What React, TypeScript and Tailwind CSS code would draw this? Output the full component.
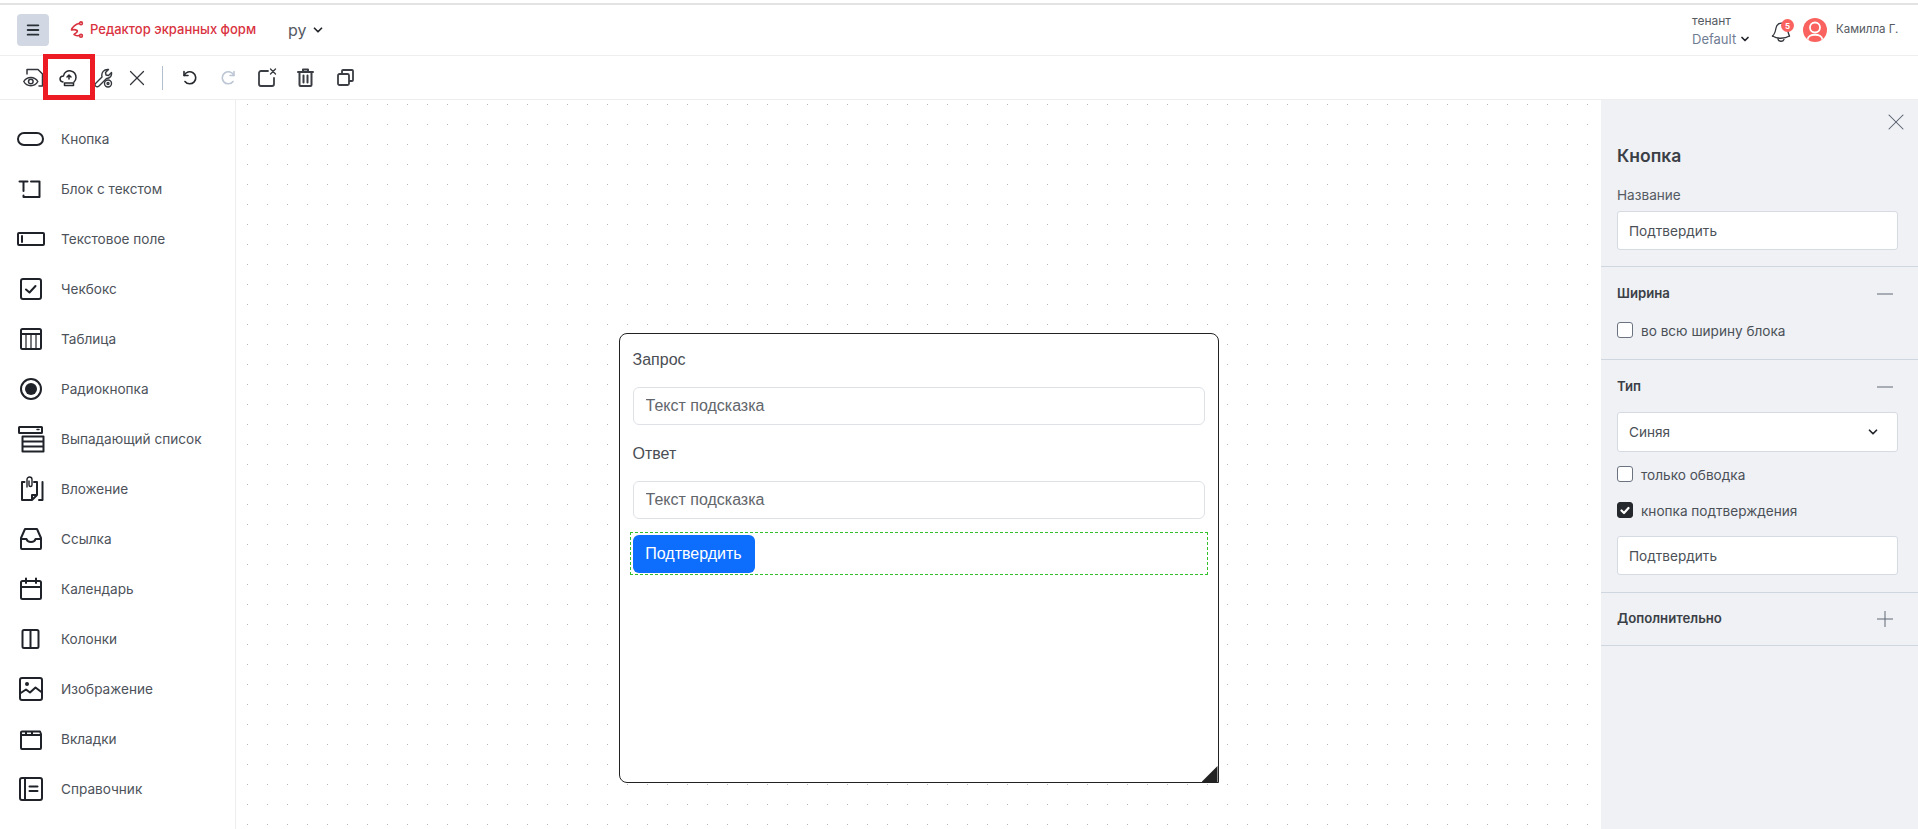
import { ChevronDown, Menu, Minus, Plus, X } from 'lucide-react';
import type { ReactNode } from 'react';

const ink = '#1f2228';

function Ico({ w = 30, h = 24, children, sw = 2 }: { w?: number; h?: number; children: ReactNode; sw?: number }) {
  return (
    <svg width={w} height={h} viewBox={`0 0 ${w} ${h}`} fill="none" stroke={ink} strokeWidth={sw} strokeLinecap="round" strokeLinejoin="round">
      {children}
    </svg>
  );
}

const paletteItems: { label: string; icon: ReactNode }[] = [
  { label: 'Кнопка', icon: <Ico><rect x="2" y="6" width="25" height="12" rx="6" /></Ico> },
  { label: 'Блок с текстом', icon: <Ico><path d="M3.500 4.500h8M7.500 4.500V14M15 4.500h8.500V20H7.500v-1.500" /></Ico> },
  { label: 'Текстовое поле', icon: <Ico><rect x="2" y="6" width="26" height="12" rx="1" /><path d="M6 9v6" /></Ico> },
  { label: 'Чекбокс', icon: <Ico><rect x="5" y="2" width="20" height="20" rx="2" /><path d="M10 12.500l3.500 3 6-6.500" /></Ico> },
  { label: 'Таблица', icon: <Ico><rect x="5" y="2" width="20" height="20" rx="1.500" /><path d="M5 7h20" /><path d="M10 7v15M15 7v15M20 7v15" strokeWidth="1.200" /></Ico> },
  { label: 'Радиокнопка', icon: <Ico><circle cx="15" cy="12" r="10" /><circle cx="15" cy="12" r="6" fill={ink} stroke="none" /></Ico> },
  { label: 'Выпадающий список', icon: <Ico w={30} h={28}><rect x="3" y="2" width="23" height="6" rx="0.500" /><path d="M6.500 11.500h21v15h-21zM6.500 16.500h21M6.500 21.500h21" /><path d="M21 4.500h2" strokeWidth="1.500" /></Ico> },
  { label: 'Вложение', icon: <Ico w={30} h={26}><path d="M8.500 6H6v18h10l5-5V6h-3M21 19h-5v5" /><path d="M26.500 6v18H23" /><path d="M11 11V3.500a2.500 2.500 0 0 1 5 0V9a1.500 1.500 0 0 1-3 0V5" strokeWidth="1.400" /></Ico> },
  { label: 'Ссылка', icon: <Ico><path d="M9 2h12l4 9v10a1 1 0 0 1-1 1H6a1 1 0 0 1-1-1V11z" /><path d="M5 12h5.500c1 4 8 4 9 0H25" /></Ico> },
  { label: 'Календарь', icon: <Ico><rect x="5" y="4" width="20" height="18" rx="1.500" /><path d="M5 10h20M10 1.500V6M20 1.500V6" /></Ico> },
  { label: 'Колонки', icon: <Ico><rect x="6.500" y="3" width="16" height="18" rx="1.500" /><path d="M14.500 3v18" /></Ico> },
  { label: 'Изображение', icon: <Ico w={30} h={26}><rect x="4" y="2" width="22" height="22" rx="2" /><path d="M4 17.500l6-4 4 3 5.500-5 6.500 5" /><circle cx="11" cy="8" r="1" fill={ink} /></Ico> },
  { label: 'Вкладки', icon: <Ico><path d="M5 5.500a1 1 0 0 1 1-1h18l1 2.500V21a1 1 0 0 1-1 1H6a1 1 0 0 1-1-1zM5 8h20M10 4.500V8M16 4.500V8" /></Ico> },
  { label: 'Справочник', icon: <Ico w={30} h={26}><rect x="4" y="2" width="22" height="22" rx="2" /><path d="M9 2v22M13.500 10.500h8M13.500 15h8" /></Ico> },
];

function Check({ on = false, label }: { on?: boolean; label: string }) {
  return (
    <div className="flex items-center gap-2 h-4">
      <span className={`flex items-center justify-center w-4 h-4 rounded-[3px] border ${on ? 'bg-[#25282d] border-[#25282d]' : 'bg-white border-[#6b7280]'}`}>
        {on && (
          <svg width="12" height="12" viewBox="0 0 12 12" fill="none" stroke="#fff" strokeWidth="2.200" strokeLinecap="round" strokeLinejoin="round">
            <path d="M2.500 6.500l2.500 2.500 4.500-5" />
          </svg>
        )}
      </span>
      <span className="pt-[2px] text-[13.6px] text-[#4b5057]">{label}</span>
    </div>
  );
}

function PanelField({ value }: { value: string }) {
  return (
    <input
      readOnly
      value={value}
      className="block w-full h-[39px] pl-[11px] pr-3 bg-white border border-[#d5dae3] rounded-[3px] text-[13.6px] text-[#4b5057] outline-none"
    />
  );
}

function CanvasField() {
  return (
    <input
      readOnly
      placeholder="Текст подсказка"
      className="block w-full h-[38px] px-3 bg-white border border-[#dee2e6] rounded-md text-base outline-none placeholder:text-[#62666b]"
    />
  );
}

function SectionHead({ title, open = true }: { title: string; open?: boolean }) {
  return (
    <div className="flex items-center justify-between h-5">
      <span className="text-[13.2px] font-semibold text-[#3b3f46]">{title}</span>
      {open ? <Minus size={26} strokeWidth={0.9} color="#5b6472" /> : <Plus size={26} strokeWidth={0.9} color="#5b6472" />}
    </div>
  );
}

export default function App() {
  return (
    <div className="relative flex flex-col h-[829px] overflow-hidden bg-white font-['Inter',sans-serif]">
      <div className="h-[3px] shrink-0" />
      <div className="h-[2px] shrink-0 bg-[#e3e3e3]" />

      {/* шапка */}
      <header className="flex items-center h-[51px] shrink-0 border-b border-[#eeeeee] pl-[17px] pr-[20px]">
        <button className="flex items-center justify-center w-8 h-8 rounded bg-[#d1d8e3]">
          <Menu size={16} strokeWidth={2.700} color="#2b2f36" />
        </button>
        <svg className="ml-[20px]" width="16" height="18" viewBox="0 0 16 18" fill="none" stroke="#d9333f" strokeWidth="1.600" strokeLinecap="round" strokeLinejoin="round">
          <path d="M10 2.500C7 3 3 6 2.500 9c2-.5 4-.5 5.500.5S6 12.500 5 13.500c1 1 3 1.500 5 1" />
          <circle cx="12" cy="2.300" r="1.400" />
          <circle cx="12" cy="14.800" r="1.400" />
        </svg>
        <span className="ml-[5px] text-[13px] font-medium text-[#d9333f]">Редактор экранных форм</span>
        <span className="ml-[32px] text-base text-[#555a62]">ру</span>
        <ChevronDown className="ml-1" size={14} strokeWidth={3} color="#23262b" />
        <div className="ml-auto flex flex-col w-[78px] text-[#555a62]">
          <span className="text-xs leading-[18px]">тенант</span>
          <span className="flex items-center gap-[3px] text-[13px] leading-[18px] text-[#6f7d93]">
            Default <ChevronDown size={12} strokeWidth={3.500} color="#23262b" />
          </span>
        </div>
        <div className="relative w-6 h-6 mr-[9px]">
          <svg width="24" height="24" viewBox="0 0 24 24" fill="none" stroke="#33363c" strokeWidth="1.300" strokeLinecap="round" strokeLinejoin="round">
            <path d="M2.500 18c2.500-2 3-5 3.500-8C6.500 6.500 10 4 13.500 5.500" />
            <path d="M17.500 12c.5 2 1 4 2 6" />
            <path d="M2.500 18c5 3 12 3 17 0" />
            <path d="M8 20.500c0 3.500 5 3.500 6 1" />
          </svg>
          <span className="absolute left-[11px] top-[1px] flex items-center justify-center w-[13px] h-[13px] rounded-full bg-[#f9625f] text-[8px] font-bold text-white">5</span>
        </div>
        <div className="flex items-center justify-center w-6 h-6 rounded-full bg-[#f9625f] overflow-hidden">
          <svg width="24" height="24" viewBox="0 0 24 24" fill="none" stroke="#fff" strokeWidth="1.800">
            <circle cx="12" cy="9.500" r="5" />
            <path d="M4.500 22c0-7 15-7 15 0" />
          </svg>
        </div>
        <span className="ml-[9px] w-[62px] text-[11.5px] text-[#555a62] whitespace-nowrap">Камилла Г.</span>
      </header>

      {/* панель инструментов */}
      <div className="flex items-center h-11 shrink-0 border-b border-[#eeeeee] pl-[23px]">
        <svg width="21" height="20" viewBox="0 0 21 20" fill="none" stroke="#33363c" strokeWidth="1.500" strokeLinecap="round" strokeLinejoin="round">
          <path d="M4 6V1.500h11l4.500 4.500v12H16" />
          <path d="M.800 13.500c3-5.500 11-5.500 14 0-3 5.500-11 5.500-14 0z" />
          <circle cx="7.800" cy="13.500" r="2.300" />
        </svg>
        <svg className="ml-[15px]" width="20" height="20" viewBox="0 0 20 20" fill="none" stroke="#26292e" strokeWidth="1.500" strokeLinecap="round" strokeLinejoin="round">
          <path d="M4 14C0 13.500 0 8 4.500 8 5 4 9 2 12 3c3 .8 5 3.500 5 6.500 0 2-1 3.500-2 4.500" />
          <path d="M10 11V7M8 9l2-2 2 2" />
          <path d="M5.500 15h9v2.500h-9z" />
        </svg>
        <svg className="ml-[15px]" width="19" height="20" viewBox="0 0 19 20" fill="none" stroke="#33363c" strokeWidth="1.400" strokeLinecap="round" strokeLinejoin="round">
          <path d="M1.500 15.500L8 9C7 4.500 10 1 14.500 1.500l-3 3 .5 2.500 2.500.5 3-3c.5 3.500-1.500 6-5 6L5 18c-1 1-2.500 1-3.500 0s-1-1.500 0-2.500z" />
          <circle cx="14" cy="15.500" r="3.500" fill="#fff" />
          <circle cx="14" cy="15.500" r="1" />
        </svg>
        <X className="ml-[11px]" size={26} strokeWidth={1.150} color="#33363c" />
        <div className="ml-[12px] w-px h-6 bg-[#b4bfce]" />
        <svg className="ml-[19px]" width="15" height="15" viewBox="0 0 15 15" fill="none" stroke="#26292e" strokeWidth="1.600" strokeLinecap="round" strokeLinejoin="round">
          <path d="M2 1.500v4h4" />
          <path d="M2.200 5.500A6 6 0 1 1 3 11.500" />
        </svg>
        <svg className="ml-[24px]" width="15" height="15" viewBox="0 0 15 15" fill="none" stroke="#bcc6d4" strokeWidth="1.600" strokeLinecap="round" strokeLinejoin="round">
          <path d="M13 1.500v4H9" />
          <path d="M12.800 5.500A6 6 0 1 0 12 11.500" />
        </svg>
        <svg className="ml-[22px]" width="19" height="19" viewBox="0 0 19 19" fill="none" stroke="#3a3d43" strokeWidth="1.800" strokeLinecap="round" strokeLinejoin="round">
          <path d="M10 3H3a2 2 0 0 0-2 2v11a2 2 0 0 0 2 2h11a2 2 0 0 0 2-2V10" />
          <path d="M12.500 1l5 5M17.500 1l-5 5" strokeWidth="1.400" />
        </svg>
        <svg className="ml-[20px]" width="17" height="19" viewBox="0 0 17 19" fill="none" stroke="#3a3d43" strokeWidth="2" strokeLinecap="round" strokeLinejoin="round">
          <path d="M1 4h15M6 4V1.500h5V4M2.500 4v13a1 1 0 0 0 1 1h10a1 1 0 0 0 1-1V4M6.500 7.500v7M10.500 7.500v7" />
        </svg>
        <svg className="ml-[23px]" width="17" height="17" viewBox="0 0 17 17" fill="none" stroke="#3a3d43" strokeWidth="1.800" strokeLinejoin="round">
          <rect x="1" y="5" width="11" height="11" rx="1.500" />
          <path d="M5 5V2a1 1 0 0 1 1-1h9a1 1 0 0 1 1 1v9a1 1 0 0 1-1 1h-3" />
        </svg>
      </div>

      <div className="flex flex-1 min-h-0">
        {/* палитра */}
        <aside className="w-[236px] shrink-0 border-r border-[#eeeeee] pt-[14px]">
          {paletteItems.map((item) => (
            <div key={item.label} className="flex items-center h-[50px] pl-[16px]">
              <span className="flex items-center justify-center w-[30px]">{item.icon}</span>
              <span className="ml-[15px] pt-[1px] text-[13.6px] text-[#4d525a]">{item.label}</span>
            </div>
          ))}
        </aside>

        {/* холст */}
        <main className="flex flex-1 justify-center pt-[233px] bg-[radial-gradient(circle_at_11.5px_4.5px,#b5b5b5_0.7px,transparent_1px)] bg-[size:20px_20px]">
          <div className="relative w-[600px] h-[450px] bg-white border border-[#222222] rounded-t-lg rounded-bl-lg pt-[14px] px-[13px] font-['Liberation_Sans',sans-serif] text-[#4a4e54]">
            <div className="h-6 leading-6 mb-[15px]">Запрос</div>
            <CanvasField />
            <div className="h-6 leading-6 mt-[17px] mb-[15px]">Ответ</div>
            <CanvasField />
            <div className="mt-[13px] -mx-[3px] h-[43px] border border-dashed border-[#34c02a] p-[2px]">
              <button className="h-[38px] w-[122px] rounded-md bg-[#0d6efd] text-white">Подтвердить</button>
            </div>
            <div className="absolute right-0 bottom-0 w-4 h-4 bg-[#222222] [clip-path:polygon(100%_0,100%_100%,0_100%)]" />
          </div>
        </main>

        {/* свойства */}
        <aside className="w-[317px] shrink-0 bg-[#eff1f5] relative">
          <X className="absolute right-[8px] top-[8px]" size={28} strokeWidth={0.9} color="#555d69" />
          <div className="px-4 pr-5 pt-[44px] pb-[16px] border-b border-[#cfd6e0]">
            <div className="h-6 leading-6 text-[17.5px] font-semibold text-[#3b3f46]">Кнопка</div>
            <div className="mt-[17px] mb-[6px] h-5 leading-5 text-[13.6px] text-[#555a62]">Название</div>
            <PanelField value="Подтвердить" />
          </div>
          <div className="px-4 pr-5 pt-[17px] pb-[21px] border-b border-[#cfd6e0]">
            <SectionHead title="Ширина" />
            <div className="mt-[18px]"><Check label="во всю ширину блока" /></div>
          </div>
          <div className="px-4 pr-5 pt-[17px] pb-[17px] border-b border-[#cfd6e0]">
            <SectionHead title="Тип" />
            <div className="mt-[15px] flex items-center justify-between h-[40px] pl-[11px] pr-[17px] bg-white border border-[#d5dae3] rounded-[3px] text-[13.6px] text-[#4b5057]">
              Синяя <ChevronDown size={14} strokeWidth={3} color="#23262b" />
            </div>
            <div className="mt-[14px]"><Check label="только обводка" /></div>
            <div className="mt-[20px]"><Check on label="кнопка подтверждения" /></div>
            <div className="mt-[18px]"><PanelField value="Подтвердить" /></div>
          </div>
          <div className="px-4 pr-5 pt-[16px] pb-[16px] border-b border-[#cfd6e0]">
            <SectionHead title="Дополнительно" open={false} />
          </div>
        </aside>
      </div>

      {/* красная рамка поверх панели */}
      <div className="absolute left-[43px] top-[54px] w-[52px] h-[46px] border-[5px] border-[#ed1c24]" />
    </div>
  );
}
